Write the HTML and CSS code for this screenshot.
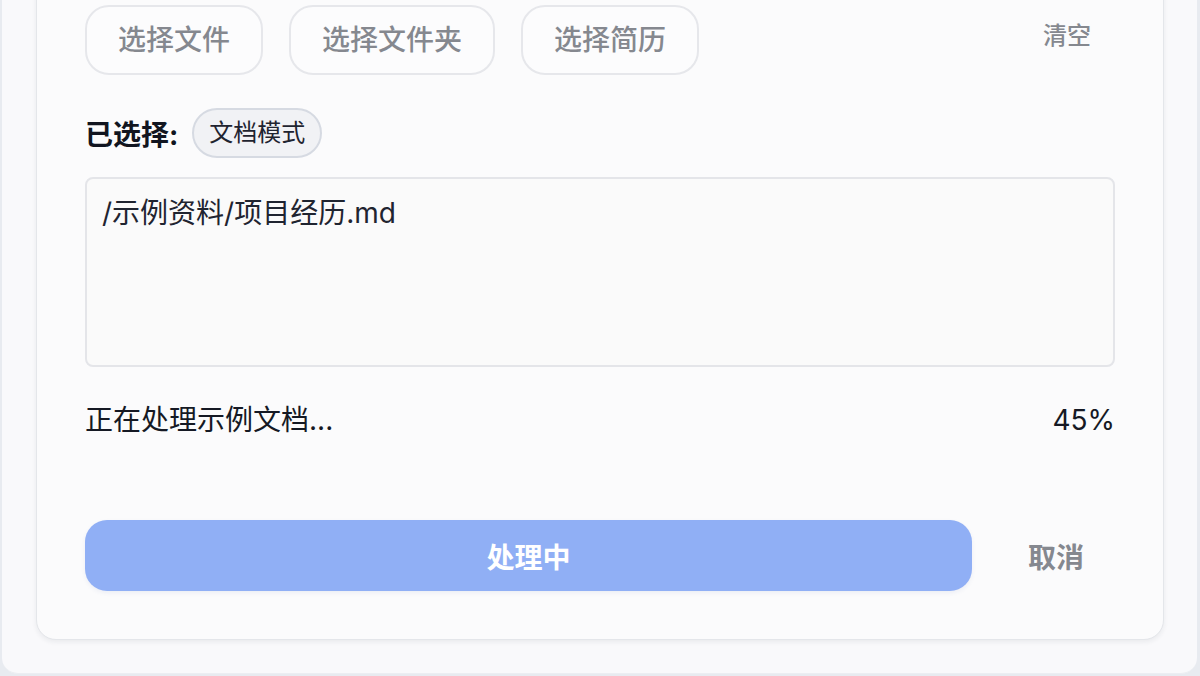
FILE: index.html
```html
<!DOCTYPE html>
<html lang="zh-CN">
<head>
<meta charset="utf-8">
<title>处理文档</title>
<link rel="stylesheet" href="styles.css">
</head>
<body>
<div class="outer">
  <div class="card">
    <div class="pick-row">
      <button class="pick-btn">选择文件</button>
      <button class="pick-btn">选择文件夹</button>
      <button class="pick-btn">选择简历</button>
      <button class="clear-btn">清空</button>
    </div>
    <div class="selected-row">
      <span class="selected-label">已选择:</span>
      <span class="chip">文档模式</span>
    </div>
    <div class="paths">/示例资料/项目经历.md</div>
    <div class="progress-row">
      <span>正在处理示例文档...</span>
      <span>45%</span>
    </div>
    <div class="action-row">
      <button class="submit-btn">处理中</button>
      <button class="cancel-btn">取消</button>
    </div>
  </div>
</div>
</body>
</html>
```

FILE: styles.css
```css
* { box-sizing: border-box; }

html, body {
  margin: 0;
  height: 676px;
  overflow: hidden;
  background: #e8ebf0;
  font-family: Inter, "Noto Sans CJK SC", sans-serif;
  color: #1b1f29;
}

button {
  font-family: inherit;
  cursor: pointer;
}

.outer {
  margin: -60px 3px 0 2px;
  padding: 16px 33px 33px 34px;
  background: #f9f9fb;
  border-radius: 0 0 16px 16px;
  border-bottom: 1px solid #eceef2;
}

.card {
  background: #fbfbfc;
  border: 1px solid #e4e6ea;
  border-radius: 20px;
  box-shadow: 0 2px 5px rgba(30, 40, 60, 0.07);
  padding: 48px 48px 48px 48px;
}

.pick-row {
  display: flex;
  align-items: center;
  gap: 26px;
  height: 70px;
}

.pick-btn {
  height: 70px;
  padding: 0 31px;
  border: 2px solid #e6e7eb;
  border-radius: 24px;
  background: #fcfcfd;
  color: #85888f;
  font-size: 28px;
  font-weight: 500;
  line-height: 1;
}

.clear-btn {
  margin-left: auto;
  align-self: flex-start;
  margin-top: 15px;
  padding: 0 24px 0 0;
  border: none;
  background: none;
  color: #85888f;
  font-size: 24px;
  font-weight: 500;
  line-height: 32px;
}

.selected-row {
  display: flex;
  align-items: center;
  gap: 14px;
  margin-top: 33px;
}

.selected-label {
  font-size: 28px;
  font-weight: 700;
  color: #111520;
}

.chip {
  padding: 10px 15px;
  border: 2px solid #d6dae2;
  border-radius: 999px;
  background: #f1f2f5;
  font-size: 24px;
  line-height: 26px;
  color: #1f2430;
}

.paths {
  margin-top: 19px;
  height: 190px;
  padding: 14px 15px;
  border: 2px solid #e4e5e9;
  border-radius: 8px;
  background: #fafafa;
  font-size: 28px;
  line-height: 40px;
  color: #1f2430;
}

.progress-row {
  display: flex;
  justify-content: space-between;
  margin-top: 33px;
  font-size: 28px;
  line-height: 40px;
  color: #151924;
}

.action-row {
  display: flex;
  align-items: center;
  gap: 25px;
  margin-top: 80px;
}

.submit-btn {
  flex: 1;
  height: 71px;
  border: none;
  border-radius: 22px;
  background: #90aff5;
  color: #ffffff;
  font-size: 28px;
  font-weight: 700;
  box-shadow: 0 2px 4px rgba(60, 90, 160, 0.08);
}

.cancel-btn {
  width: 118px;
  height: 71px;
  border: none;
  background: none;
  color: #85888f;
  font-size: 28px;
  font-weight: 700;
}
```
